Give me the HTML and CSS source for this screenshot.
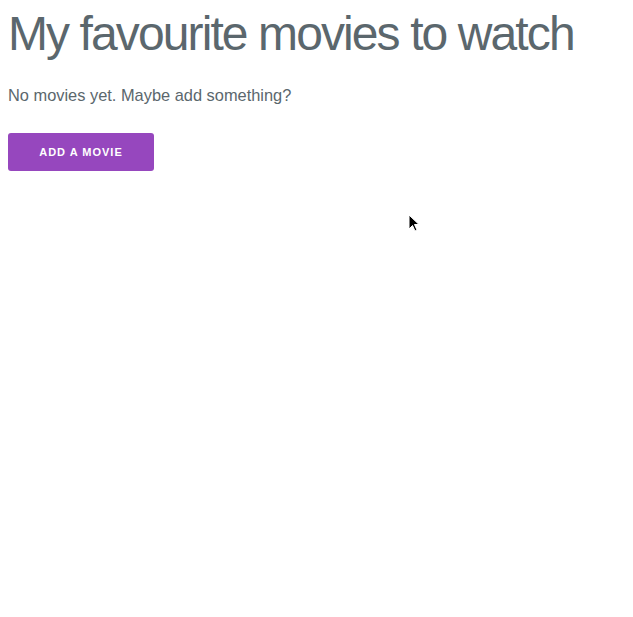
FILE: index.html
```html
<!DOCTYPE html>
<html>
<head>
<meta charset="utf-8">
<link rel="stylesheet" href="styles.css">
</head>
<body>
<main class="page">
  <h1 class="title">My favourite movies to watch</h1>
  <p class="empty">No movies yet. Maybe add something?</p>
  <button class="btn">ADD A MOVIE</button>
</main>
<svg class="cursor" width="12" height="20" viewBox="0 0 12 20"><path d="M1 1 L1 15 L4.5 11.5 L7 17 L9 16 L6.5 10.5 L11 10.5 Z" fill="#000" stroke="#fff" stroke-width="1"/></svg>
</body>
</html>
```
FILE: styles.css
```css
html, body { margin: 0; background: #fff; }
body { padding: 8px; font-family: "Liberation Sans", Arial, sans-serif; color: #5b676d; }
.page { display: flex; flex-direction: column; align-items: flex-start; }
.title { margin: 0; font-weight: 400; font-size: 48px; letter-spacing: -1.9px; line-height: 52px; color: #5b676d; }
.empty { margin: 25px 0 0; font-size: 16.4px; line-height: 20px; color: #5b676d; }
.btn { margin-top: 28px; width: 146px; height: 38px; border: none; border-radius: 3px; background: #9647be; color: #fff; font-family: "Liberation Sans", Arial, sans-serif; font-weight: 700; font-size: 11px; letter-spacing: 1px; padding: 0; }
.cursor { position: absolute; left: 408px; top: 214px; }
```
